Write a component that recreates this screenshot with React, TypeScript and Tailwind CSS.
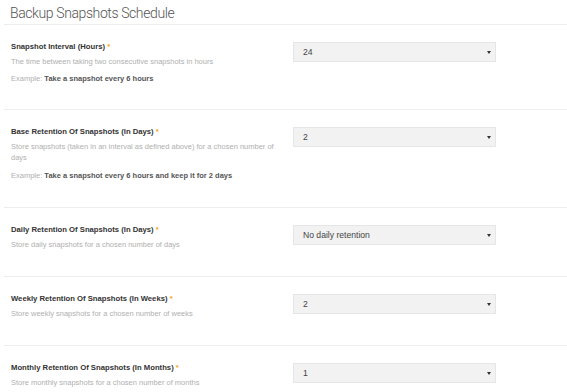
const sections = [
  {
    label: "Snapshot Interval (Hours)",
    desc: "The time between taking two consecutive snapshots in hours",
    example: "Take a snapshot every 6 hours",
    value: "24",
  },
  {
    label: "Base Retention Of Snapshots (In Days)",
    desc: "Store snapshots (taken in an interval as defined above) for a chosen number of days",
    example: "Take a snapshot every 6 hours and keep it for 2 days",
    value: "2",
    wide: true,
  },
  {
    label: "Daily Retention Of Snapshots (In Days)",
    desc: "Store daily snapshots for a chosen number of days",
    value: "No daily retention",
  },
  {
    label: "Weekly Retention Of Snapshots (In Weeks)",
    desc: "Store weekly snapshots for a chosen number of weeks",
    value: "2",
  },
  {
    label: "Monthly Retention Of Snapshots (In Months)",
    desc: "Store monthly snapshots for a chosen number of months",
    value: "1",
  },
];

function FakeSelect({ value }: { value: string }) {
  return (
    <div className="mt-px flex h-[20px] w-[203px] items-center justify-between border border-[#e6e6e6] bg-[#f2f2f2] pl-[9px] pr-[4px] text-[8.6px] text-[#444]">
      <span>{value}</span>
      <span className="h-0 w-0 border-x-[2px] border-t-[3px] border-x-transparent border-t-[#333]" />
    </div>
  );
}

export default function App() {
  return (
    <div
      className="h-[392px] w-[567px] overflow-hidden bg-white pl-[4px]"
      style={{ fontFamily: '"Liberation Sans", Arial, sans-serif' }}
    >
      <div className="border-b border-[#eeeeee] pb-[4px] pl-[6px] pt-[6px]">
        <h1
          className="text-[14px] font-light leading-[14px] tracking-[-0.4px] text-[#555]"
          style={{ fontFamily: 'Roboto, "Liberation Sans", sans-serif' }}
        >
          Backup Snapshots Schedule
        </h1>
      </div>

      {sections.map((s, i) => (
        <div
          key={i}
          className={`flex pt-[16px] ${i === 0 ? "pb-[25px]" : "pb-[26px]"} ${i < sections.length - 1 ? "border-b border-[#eeeeee]" : ""}`}
        >
          <div className="w-[289px] pl-[7px] pr-[14px]">
            <div className="text-[7.7px] font-bold leading-[12px] text-[#333]">
              {s.label} <span className="text-[#f5a623]">*</span>
            </div>
            <p className="mt-[3px] text-[7.5px] leading-[11px] text-[#b0b0b0]">{s.desc}</p>
            {s.example && (
              <p className={`${s.wide ? "mt-[8px]" : "mt-[7px]"} text-[7.5px] leading-[10px] text-[#b0b0b0]`}>
                Example: <span className="font-bold text-[#555]">{s.example}</span>
              </p>
            )}
          </div>
          <FakeSelect value={s.value} />
        </div>
      ))}
    </div>
  );
}
